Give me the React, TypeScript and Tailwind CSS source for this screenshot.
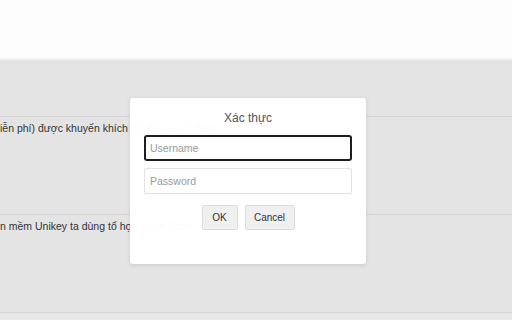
import React from "react";

export default function App() {
  const font = { fontFamily: '"Liberation Sans", Arial, sans-serif' };
  return (
    <div className="relative w-[512px] h-[320px] overflow-hidden bg-[#e4e4e4]" style={font}>
      <div className="h-[58px] bg-[#fdfdfd]" />
      <div className="h-[2px] bg-[#f2f2f2]" />
      <div className="h-[56px]" />
      <div className="h-[98px] border-t border-[#d5d5d5] pt-[4px] text-[10.5px] leading-[14px] text-[#333] whitespace-nowrap">
        iễn phí) được khuyến khích cài đặt và sử dụng
      </div>
      <div className="h-[98px] border-t border-[#d5d5d5] pt-[4px] text-[10.5px] leading-[14px] text-[#333] whitespace-nowrap">
        n mềm Unikey ta dùng tổ hợp phím Ctrl + Shift
      </div>
      <div className="h-[10px] border-t border-[#d5d5d5] bg-[#e8e8e8]" />

      <div className="absolute left-[130px] top-[98px] w-[236px] h-[166px] rounded-[3px] bg-[rgba(255,255,255,0.98)] shadow-[0_1px_4px_rgba(0,0,0,0.12)] flex flex-col items-center px-[14px] pt-[12px]">
        <div className="text-[12px] leading-[16px] text-[#555]">Xác thực</div>
        <input
          className="mt-[9px] w-[208px] h-[26px] rounded-[3px] border-[2px] border-[#1e1e1e] bg-white px-[4px] text-[10.5px] text-[#333] placeholder:text-[#9a9a9a] outline-none"
          placeholder="Username"
          style={font}
        />
        <input
          className="mt-[7px] w-[208px] h-[26px] rounded-[2px] border border-[#e3e3e3] bg-white px-[5px] text-[10.5px] text-[#333] placeholder:text-[#9a9a9a] outline-none"
          placeholder="Password"
          style={font}
        />
        <div className="mt-[11px] flex gap-[7px]">
          <button className="w-[36px] h-[25px] rounded-[2px] border border-[#dcdcdc] bg-[#f0f0f0] text-[10px] text-[#333]" style={font}>
            OK
          </button>
          <button className="w-[50px] h-[25px] rounded-[2px] border border-[#dcdcdc] bg-[#f0f0f0] text-[10px] text-[#333]" style={font}>
            Cancel
          </button>
        </div>
      </div>
    </div>
  );
}
